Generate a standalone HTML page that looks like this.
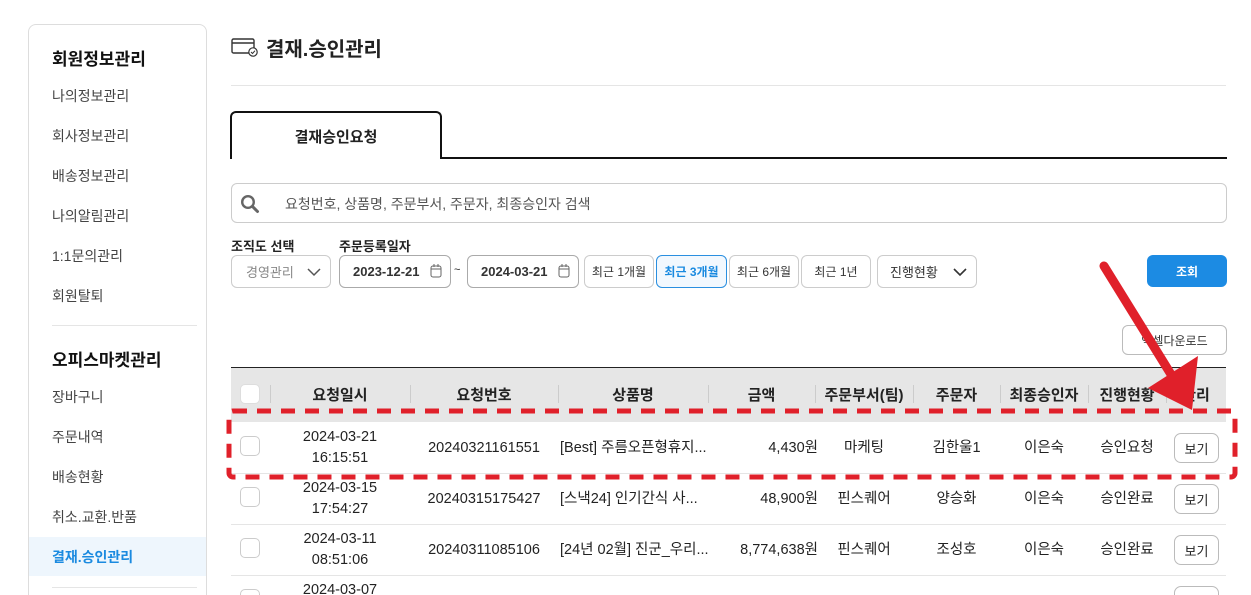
<!DOCTYPE html>
<html><head><meta charset="utf-8"><style>
*{box-sizing:border-box;margin:0;padding:0}
html,body{width:1251px;height:595px;overflow:hidden}
body{background:#fff;font-family:"Liberation Sans","Noto Sans CJK KR",sans-serif;color:#222;position:relative}
.a{position:absolute}
.side{left:28px;top:24px;width:179px;height:620px;border:1px solid #ddd;border-radius:8px}
.sh{position:absolute;left:23px;font-size:17px;font-weight:bold;color:#111}
.si{position:absolute;left:23px;font-size:14px;color:#444}
.btn{position:absolute;top:255px;height:33px;border:1px solid #ccc;border-radius:6px;font-size:12px;display:flex;align-items:center;justify-content:center;color:#333}
.lbl{position:absolute;top:236px;font-size:13px;font-weight:bold;color:#222}
.th{position:absolute;top:384px;font-size:15px;font-weight:bold;color:#222;text-align:center}
.sep{position:absolute;top:385px;width:1px;height:18px;background:#ccc}
.c{position:absolute;font-size:14.5px;color:#222;text-align:center;line-height:21px}
.cb{position:absolute;left:240px;width:20px;height:20px;border:1px solid #ccc;border-radius:5px;background:#fff}
.bk{position:absolute;left:1174px;width:45px;height:30px;border:1px solid #bbb;border-radius:7px;font-size:13px;display:flex;align-items:center;justify-content:center}
</style></head><body>
<div class="a side">
<div class="sh" style="top:20px">회원정보관리</div>
<div class="si" style="top:61px">나의정보관리</div>
<div class="si" style="top:101px">회사정보관리</div>
<div class="si" style="top:141px">배송정보관리</div>
<div class="si" style="top:181px">나의알림관리</div>
<div class="si" style="top:221px">1:1문의관리</div>
<div class="si" style="top:261px">회원탈퇴</div>
<div class="a" style="left:23px;top:300px;width:145px;height:1px;background:#e5e5e5"></div>
<div class="sh" style="top:321px">오피스마켓관리</div>
<div class="si" style="top:362px">장바구니</div>
<div class="si" style="top:402px">주문내역</div>
<div class="si" style="top:442px">배송현황</div>
<div class="si" style="top:482px">취소.교환.반품</div>
<div class="a" style="left:0;top:512px;width:177px;height:39px;background:#eef6fd"></div>
<div class="si" style="top:522px;color:#1a8ae0;font-weight:bold">결재.승인관리</div>
<div class="a" style="left:23px;top:562px;width:145px;height:1px;background:#e5e5e5"></div>
</div>
<svg class="a" style="left:231px;top:37px" width="28" height="20" viewBox="0 0 28 20"><rect x="1" y="2" width="22" height="14" rx="1.5" fill="none" stroke="#333" stroke-width="1.4"/><line x1="1" y1="6" x2="23" y2="6" stroke="#333" stroke-width="1.4"/><circle cx="22" cy="15" r="4.2" fill="#fff" stroke="#333" stroke-width="1.2"/><path d="M20 15l1.5 1.5 2.5-2.8" fill="none" stroke="#333" stroke-width="1"/></svg>
<div class="a" style="left:266px;top:33px;font-size:20px;font-weight:bold;color:#222">결재.승인관리</div>
<div class="a" style="left:231px;top:85px;width:995px;height:1px;background:#e5e5e5"></div>
<div class="a" style="left:230px;top:111px;width:212px;height:48px;border:2px solid #111;border-bottom:none;border-radius:6px 6px 0 0;background:#fff"></div>
<div class="a" style="left:441px;top:157px;width:786px;height:2px;background:#111"></div>
<div class="a" style="left:230px;top:126px;width:212px;text-align:center;font-size:15px;font-weight:bold">결재승인요청</div>
<div class="a" style="left:231px;top:183px;width:996px;height:40px;border:1px solid #ccc;border-radius:6px"></div>
<svg class="a" style="left:240px;top:194px" width="20" height="20" viewBox="0 0 20 20"><circle cx="8" cy="8" r="5.8" fill="none" stroke="#666" stroke-width="2.4"/><line x1="12.5" y1="12.5" x2="17.5" y2="17.5" stroke="#666" stroke-width="3" stroke-linecap="round"/></svg>
<div class="a" style="left:285px;top:194px;font-size:14px;color:#555">요청번호, 상품명, 주문부서, 주문자, 최종승인자 검색</div>
<div class="lbl" style="left:231px">조직도 선택</div>
<div class="lbl" style="left:339px">주문등록일자</div>
<div class="btn" style="left:231px;width:100px;justify-content:flex-start;padding-left:14px;font-size:13px;color:#888">경영관리<svg style="position:absolute;right:9px;top:11px" width="14" height="10"><path d="M1 2l6 6 6-6" fill="none" stroke="#555" stroke-width="1.5"/></svg></div>
<div class="btn" style="left:339px;width:112px;font-size:13px;font-weight:bold;border-color:#aaa;justify-content:flex-start;padding-left:13px">2023-12-21<svg style="position:absolute;right:8px;top:7px" width="12" height="15"><rect x="1" y="3" width="10" height="11" rx="2" fill="none" stroke="#666"/><line x1="1" y1="6" x2="11" y2="6" stroke="#666"/><line x1="4" y1="1" x2="4" y2="4" stroke="#666"/><line x1="8" y1="1" x2="8" y2="4" stroke="#666"/></svg></div>
<div class="a" style="left:454px;top:264px;font-size:11px">~</div>
<div class="btn" style="left:467px;width:112px;font-size:13px;font-weight:bold;border-color:#aaa;justify-content:flex-start;padding-left:13px">2024-03-21<svg style="position:absolute;right:8px;top:7px" width="12" height="15"><rect x="1" y="3" width="10" height="11" rx="2" fill="none" stroke="#666"/><line x1="1" y1="6" x2="11" y2="6" stroke="#666"/><line x1="4" y1="1" x2="4" y2="4" stroke="#666"/><line x1="8" y1="1" x2="8" y2="4" stroke="#666"/></svg></div>
<div class="btn" style="left:584px;width:70px">최근 1개월</div>
<div class="btn" style="left:656px;width:71px;border-color:#2a8fe0;background:#f2f8fe;color:#1a8ae0;font-weight:bold">최근 3개월</div>
<div class="btn" style="left:729px;width:70px">최근 6개월</div>
<div class="btn" style="left:801px;width:70px">최근 1년</div>
<div class="btn" style="left:877px;width:100px;font-size:13px;justify-content:flex-start;padding-left:12px">진행현황<svg style="position:absolute;right:9px;top:11px" width="14" height="10"><path d="M1 2l6 6 6-6" fill="none" stroke="#333" stroke-width="1.6"/></svg></div>
<div class="btn" style="left:1147px;width:80px;height:32px;border:none;background:#1c8be3;color:#fff;font-weight:bold;top:255px">조회</div>
<div class="btn" style="left:1122px;width:105px;height:30px;top:325px;border-color:#bbb;font-size:12px">엑셀다운로드</div>
<div class="a" style="left:231px;top:367px;width:995px;height:1px;background:#222"></div>
<div class="a" style="left:231px;top:368px;width:995px;height:54px;background:#e6e6e6"></div>
<div class="cb" style="top:384px;border-color:#ddd"></div>
<div class="th" style="left:270px;width:140px">요청일시</div>
<div class="th" style="left:410px;width:148px">요청번호</div>
<div class="th" style="left:558px;width:150px">상품명</div>
<div class="th" style="left:708px;width:107px">금액</div>
<div class="th" style="left:815px;width:98px">주문부서(팀)</div>
<div class="th" style="left:913px;width:87px">주문자</div>
<div class="th" style="left:1000px;width:88px">최종승인자</div>
<div class="th" style="left:1088px;width:78px">진행현황</div>
<div class="th" style="left:1166px;width:60px">관리</div>
<div class="sep" style="left:270px"></div><div class="sep" style="left:410px"></div><div class="sep" style="left:558px"></div><div class="sep" style="left:708px"></div><div class="sep" style="left:815px"></div><div class="sep" style="left:913px"></div><div class="sep" style="left:1000px"></div><div class="sep" style="left:1088px"></div><div class="sep" style="left:1166px"></div>

<div class="a" style="left:231px;top:473px;width:995px;height:1px;background:#e5e5e5"></div>
<div class="a" style="left:231px;top:524px;width:995px;height:1px;background:#e5e5e5"></div>
<div class="a" style="left:231px;top:575px;width:995px;height:1px;background:#e5e5e5"></div>

<div class="cb" style="top:436px"></div>
<div class="c" style="left:270px;width:140px;top:427px">2024-03-21<br>16:15:51</div>
<div class="c" style="left:410px;width:148px;top:438px">20240321161551</div>
<div class="c" style="left:560px;top:438px;text-align:left">[Best] 주름오픈형휴지...</div>
<div class="c" style="left:708px;width:110px;top:438px;text-align:right">4,430원</div>
<div class="c" style="left:815px;width:98px;top:438px">마케팅</div>
<div class="c" style="left:913px;width:87px;top:438px">김한울1</div>
<div class="c" style="left:1000px;width:88px;top:438px">이은숙</div>
<div class="c" style="left:1088px;width:78px;top:438px">승인요청</div>
<div class="bk" style="top:433px">보기</div>

<div class="cb" style="top:487px"></div>
<div class="c" style="left:270px;width:140px;top:478px">2024-03-15<br>17:54:27</div>
<div class="c" style="left:410px;width:148px;top:489px">20240315175427</div>
<div class="c" style="left:560px;top:489px;text-align:left">[스낵24] 인기간식 사...</div>
<div class="c" style="left:708px;width:110px;top:489px;text-align:right">48,900원</div>
<div class="c" style="left:815px;width:98px;top:489px">핀스퀘어</div>
<div class="c" style="left:913px;width:87px;top:489px">양승화</div>
<div class="c" style="left:1000px;width:88px;top:489px">이은숙</div>
<div class="c" style="left:1088px;width:78px;top:489px">승인완료</div>
<div class="bk" style="top:484px">보기</div>

<div class="cb" style="top:538px"></div>
<div class="c" style="left:270px;width:140px;top:529px">2024-03-11<br>08:51:06</div>
<div class="c" style="left:410px;width:148px;top:540px">20240311085106</div>
<div class="c" style="left:560px;top:540px;text-align:left">[24년 02월] 진군_우리...</div>
<div class="c" style="left:708px;width:110px;top:540px;text-align:right">8,774,638원</div>
<div class="c" style="left:815px;width:98px;top:540px">핀스퀘어</div>
<div class="c" style="left:913px;width:87px;top:540px">조성호</div>
<div class="c" style="left:1000px;width:88px;top:540px">이은숙</div>
<div class="c" style="left:1088px;width:78px;top:540px">승인완료</div>
<div class="bk" style="top:535px">보기</div>

<div class="cb" style="top:589px"></div>
<div class="c" style="left:270px;width:140px;top:580px">2024-03-07</div>
<div class="bk" style="top:586px"></div>

<svg class="a" style="left:0;top:0" width="1251" height="595">
<rect x="229" y="411" width="1006" height="66" rx="4" fill="none" stroke="#e0202a" stroke-width="5" stroke-dasharray="14 10"/>
<line x1="1104" y1="266" x2="1172" y2="376" stroke="#e0202a" stroke-width="9" stroke-linecap="round"/>
<polygon points="1148,388 1198,356 1192,410" fill="#e0202a"/>
</svg>
</body></html>
